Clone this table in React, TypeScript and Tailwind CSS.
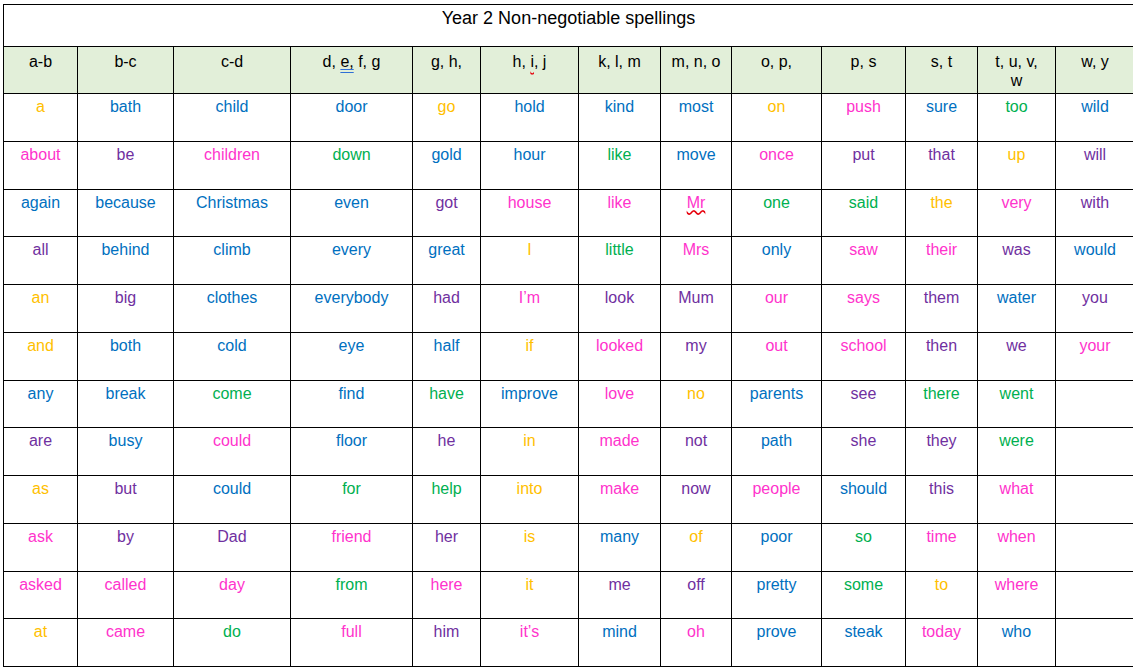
import type { ReactNode } from 'react'

type Tone = 'Y' | 'B' | 'P' | 'U' | 'G'

const toneClass: Record<Tone, string> = {
  Y: 'text-[#ffc000]',
  B: 'text-[#0070c0]',
  P: 'text-[#ff33cc]',
  U: 'text-[#7030a0]',
  G: 'text-[#00b050]',
}

const widths = [
  'w-[74px]', 'w-[96px]', 'w-[117px]', 'w-[122px]', 'w-[68px]', 'w-[98px]', 'w-[82px]',
  'w-[71px]', 'w-[90px]', 'w-[84px]', 'w-[72px]', 'w-[78px]', 'w-[78px]',
]

const headers: ReactNode[] = [
  'a-b',
  'b-c',
  'c-d',
  <>
    d,{' '}
    <span className="underline decoration-double decoration-[#2f6fd6] underline-offset-2">e,</span> f, g
  </>,
  'g, h,',
  <>
    h, <span className="underline decoration-wavy decoration-red-600 underline-offset-2">i</span>, j
  </>,
  'k, l, m',
  'm, n, o',
  'o, p,',
  'p, s',
  's, t',
  <>
    t, u, v,
    <br />w
  </>,
  'w, y',
]

// word:tone pairs, one array per column
const columns: string[][] = [
  ['a:Y', 'about:P', 'again:B', 'all:U', 'an:Y', 'and:Y', 'any:B', 'are:U', 'as:Y', 'ask:P', 'asked:P', 'at:Y'],
  ['bath:B', 'be:U', 'because:B', 'behind:B', 'big:U', 'both:B', 'break:B', 'busy:B', 'but:U', 'by:U', 'called:P', 'came:P'],
  ['child:B', 'children:P', 'Christmas:B', 'climb:B', 'clothes:B', 'cold:B', 'come:G', 'could:P', 'could:B', 'Dad:U', 'day:P', 'do:G'],
  ['door:B', 'down:G', 'even:B', 'every:B', 'everybody:B', 'eye:B', 'find:B', 'floor:B', 'for:G', 'friend:P', 'from:G', 'full:P'],
  ['go:Y', 'gold:B', 'got:U', 'great:B', 'had:U', 'half:B', 'have:G', 'he:U', 'help:G', 'her:U', 'here:P', 'him:U'],
  ['hold:B', 'hour:B', 'house:P', 'I:Y', 'I’m:P', 'if:Y', 'improve:B', 'in:Y', 'into:Y', 'is:Y', 'it:Y', 'it’s:P'],
  ['kind:B', 'like:G', 'like:P', 'little:G', 'look:U', 'looked:P', 'love:P', 'made:P', 'make:P', 'many:B', 'me:U', 'mind:B'],
  ['most:B', 'move:B', 'Mr:P', 'Mrs:P', 'Mum:U', 'my:U', 'no:Y', 'not:U', 'now:U', 'of:Y', 'off:U', 'oh:P'],
  ['on:Y', 'once:P', 'one:G', 'only:B', 'our:P', 'out:P', 'parents:B', 'path:B', 'people:P', 'poor:B', 'pretty:B', 'prove:B'],
  ['push:P', 'put:U', 'said:G', 'saw:P', 'says:P', 'school:P', 'see:U', 'she:U', 'should:B', 'so:G', 'some:G', 'steak:B'],
  ['sure:B', 'that:U', 'the:Y', 'their:P', 'them:U', 'then:U', 'there:G', 'they:U', 'this:U', 'time:P', 'to:Y', 'today:P'],
  ['too:G', 'up:Y', 'very:P', 'was:U', 'water:B', 'we:U', 'went:G', 'were:G', 'what:P', 'when:P', 'where:P', 'who:B'],
  ['wild:B', 'will:U', 'with:U', 'would:B', 'you:U', 'your:P', '', '', '', '', '', ''],
]

function Word({ entry }: { entry: string }) {
  if (!entry) return null
  const [word, tone] = entry.split(':') as [string, Tone]
  // spell-check squiggle kept from the original document
  const wavy = word === 'Mr' ? 'underline decoration-wavy decoration-red-600 underline-offset-2' : ''
  return <span className={`${toneClass[tone]} ${wavy}`}>{word}</span>
}

export default function App() {
  const rows = Array.from({ length: 12 }, (_, r) => columns.map((col) => col[r]))

  return (
    <div className="w-[1137px] h-[667px] overflow-hidden bg-white pt-[4px] pl-[3px] font-['Liberation_Sans',Arial,sans-serif]">
      <div className="w-[1130px] border-t border-l border-black">
        {/* Title row */}
        <div className="h-[42px] border-b border-black text-center text-[18px] leading-[24px] pt-[1px] text-black">
          Year 2 Non-negotiable spellings
        </div>

        {/* Letter-range header */}
        <div className="flex h-[47px] bg-[#e2efd9] border-b border-black">
          {headers.map((h, i) => (
            <div
              key={i}
              className={`${widths[i]} shrink-0 ${i < 12 ? 'border-r border-black' : ''} text-center text-[16px] leading-[19px] pt-[5px] text-black`}
            >
              {h}
            </div>
          ))}
        </div>

        {/* Word rows */}
        {rows.map((row, r) => (
          <div key={r} className="flex h-[47.75px] border-b border-black">
            {row.map((entry, c) => (
              <div
                key={c}
                className={`${widths[c]} shrink-0 ${c < 12 ? 'border-r border-black' : ''} text-center text-[16px] leading-[20px] pt-[3px]`}
              >
                <Word entry={entry} />
              </div>
            ))}
          </div>
        ))}
      </div>
    </div>
  )
}
